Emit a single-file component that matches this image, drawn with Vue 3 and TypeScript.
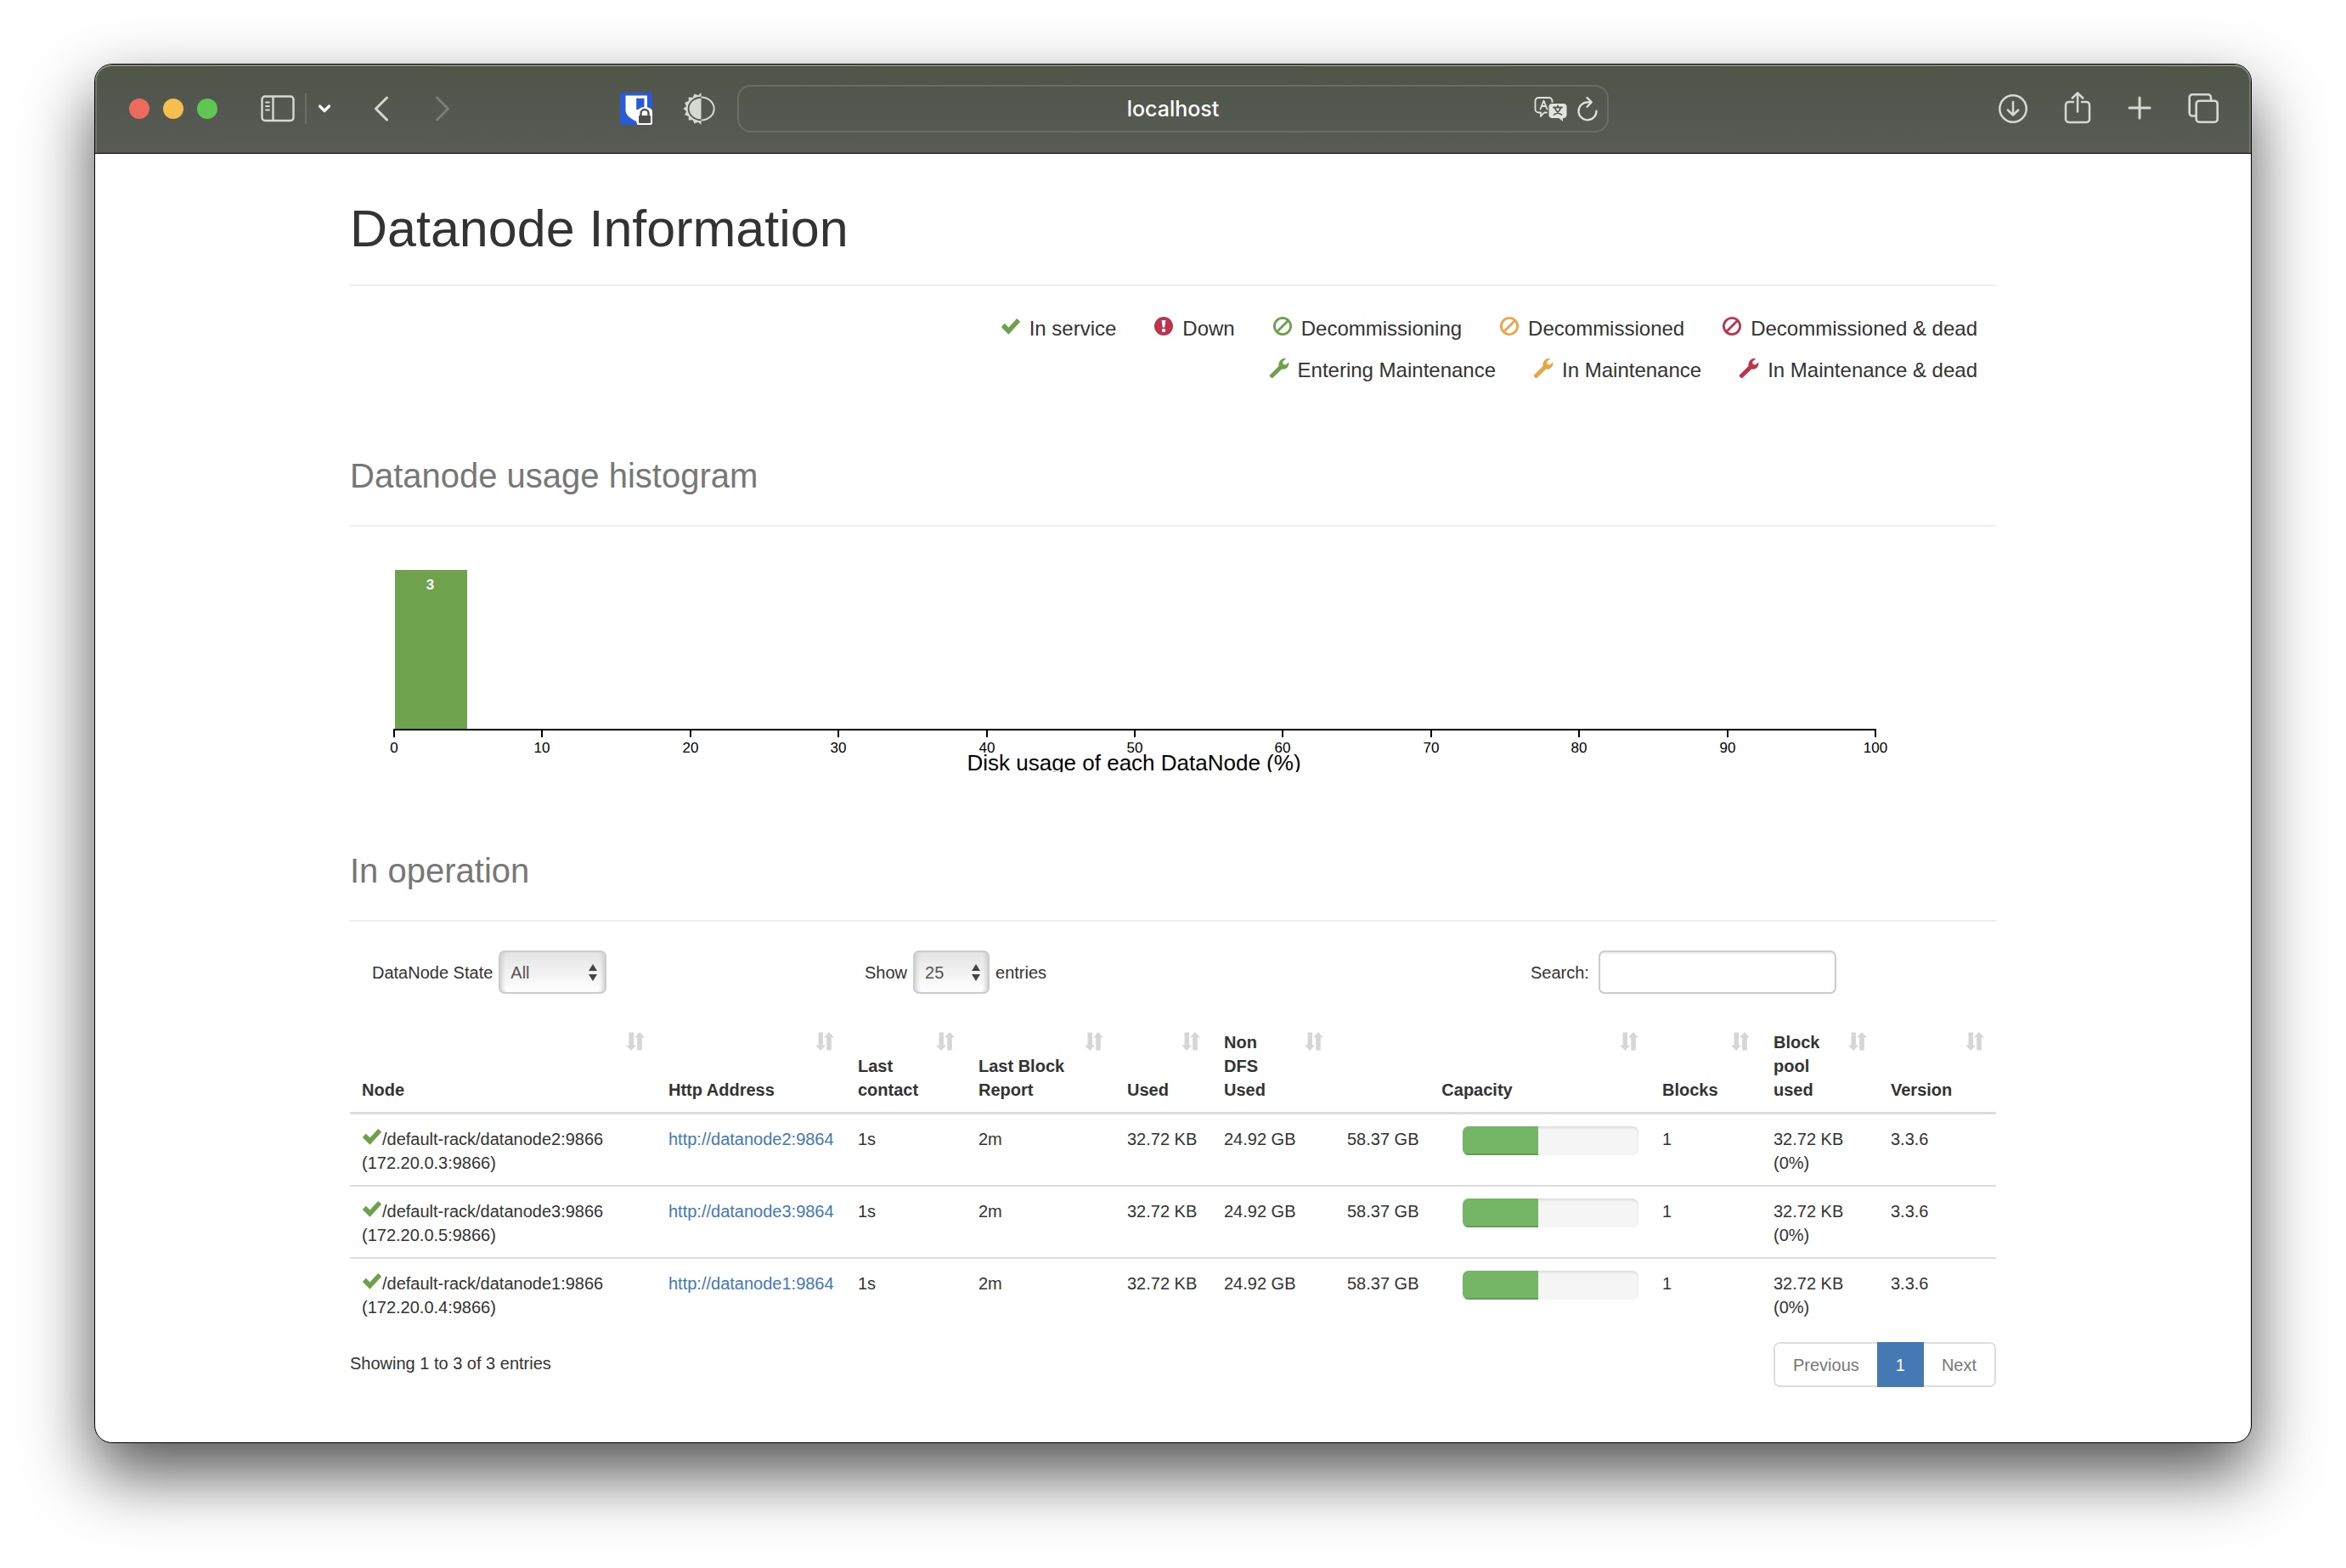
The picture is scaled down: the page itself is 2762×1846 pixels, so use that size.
<script setup lang="ts">
import { computed, ref } from 'vue'

type IconName = 'ok' | 'alert' | 'ban' | 'wrench'
type Tone = 'good' | 'warn' | 'bad'

interface LegendItem {
  icon: IconName
  tone: Tone
  label: string
}

interface DataNode {
  name: string
  address: string
  http: string
  contact: string
  report: string
  used: string
  nonDfs: string
  capacity: string
  fill: number
  blocks: number
  pool: string
  poolShare: string
  version: string
}

const legend: LegendItem[][] = [
  [
    { icon: 'ok', tone: 'good', label: 'In service' },
    { icon: 'alert', tone: 'bad', label: 'Down' },
    { icon: 'ban', tone: 'good', label: 'Decommissioning' },
    { icon: 'ban', tone: 'warn', label: 'Decommissioned' },
    { icon: 'ban', tone: 'bad', label: 'Decommissioned & dead' },
  ],
  [
    { icon: 'wrench', tone: 'good', label: 'Entering Maintenance' },
    { icon: 'wrench', tone: 'warn', label: 'In Maintenance' },
    { icon: 'wrench', tone: 'bad', label: 'In Maintenance & dead' },
  ],
]

const makeNode = (id: number, ip: string): DataNode => ({
  name: `/default-rack/datanode${id}:9866`,
  address: `(${ip}:9866)`,
  http: `http://datanode${id}:9864`,
  contact: '1s',
  report: '2m',
  used: '32.72 KB',
  nonDfs: '24.92 GB',
  capacity: '58.37 GB',
  fill: 43,
  blocks: 1,
  pool: '32.72 KB',
  poolShare: '(0%)',
  version: '3.3.6',
})

const nodes: DataNode[] = [
  makeNode(2, '172.20.0.3'),
  makeNode(3, '172.20.0.5'),
  makeNode(1, '172.20.0.4'),
]

const columns = [
  { key: 'node', label: 'Node', span: 1 },
  { key: 'http', label: 'Http Address', span: 1 },
  { key: 'contact', label: 'Last contact', span: 1 },
  { key: 'report', label: 'Last Block Report', span: 1 },
  { key: 'used', label: 'Used', span: 1 },
  { key: 'nondfs', label: 'Non DFS Used', span: 1 },
  { key: 'capacity', label: 'Capacity', span: 2 },
  { key: 'blocks', label: 'Blocks', span: 1 },
  { key: 'pool', label: 'Block pool used', span: 1 },
  { key: 'version', label: 'Version', span: 1 },
]

const state = ref('All')
const pageSize = ref('25')
const query = ref('')

const visible = computed(() =>
  nodes.filter((n) => (n.name + n.address + n.http).includes(query.value.trim())),
)

// Histogram: linear scale from 0-100 % to the plot width
const plot = { left: 52, width: 1744, top: 35, base: 222 }
const scaleX = (v: number) => plot.left + Math.round((v * plot.width) / 100)
const ticks = Array.from({ length: 11 }, (_, i) => i * 10)
const bins = [{ from: 0, to: 5, count: 3 }]
</script>

<template>
  <div class="window">
    <header class="toolbar">
      <div class="side">
        <span class="light red"></span>
        <span class="light yellow"></span>
        <span class="light green"></span>
        <button class="tool sidebar" aria-label="Sidebar">
          <svg width="40" height="32" viewBox="0 0 40 32" fill="none" stroke="currentColor" stroke-width="2.4">
            <rect x="1.5" y="1.5" width="37" height="28.5" rx="3.5" />
            <path d="M14.5 2v28" />
            <path d="M6 8.500h4M6 13h4M6 17.500h4" stroke-width="1.8" stroke-linecap="round" />
          </svg>
        </button>
        <span class="divider"></span>
        <button class="tool groups" aria-label="Tab groups">
          <svg width="16" height="12" viewBox="0 0 16 12" fill="none" stroke="#fff" stroke-width="3.2" stroke-linecap="round" stroke-linejoin="round">
            <path d="M2.500 3l5.500 5.500L13.500 3" />
          </svg>
        </button>
        <button class="tool back" aria-label="Back">
          <svg width="18" height="30" viewBox="0 0 18 30" fill="none" stroke="currentColor" stroke-width="3" stroke-linecap="round" stroke-linejoin="round">
            <path d="M15.500 2L2.500 15l13 13" />
          </svg>
        </button>
        <button class="tool forward" aria-label="Forward">
          <svg width="18" height="30" viewBox="0 0 18 30" fill="none" stroke="currentColor" stroke-width="3" stroke-linecap="round" stroke-linejoin="round">
            <path d="M2.500 2l13 13-13 13" />
          </svg>
        </button>
        <div class="extensions">
          <button class="tool" aria-label="Password manager">
            <svg width="38" height="38" viewBox="0 0 38 38">
              <rect width="38" height="38" rx="2.500" fill="#2a5bd6" />
              <path d="M6.500 3.500h25.500v17c0 6-5.500 10-12.700 13.500C12 30.500 6.500 26.500 6.500 20.500z" fill="#fff" />
              <path d="M19.200 6.800H28.500V20h-9.300z" fill="#2a5bd6" />
              <path d="M38 22v13.500a2.500 2.500 0 0 1-2.500 2.500H20.500l-1.300-3.500V27c0-6 4-10 9.500-10s9.300 2 9.300 5z" fill="#fff" />
              <path d="M24.500 28v-3.500a4.500 4.500 0 0 1 9 0V28" fill="none" stroke="#4f504d" stroke-width="2.400" />
              <rect x="22" y="27" width="14" height="9" rx="1.200" fill="#4f504d" />
            </svg>
          </button>
          <button class="tool" aria-label="Dark mode">
            <svg width="38" height="38" viewBox="0 0 38 38" fill="currentColor">
              <path d="M21.500 0L18 3.300l-4.500-1.900-1.900 4.300-4.900-.1v4.500l-4.600 1.600L4 15.900.5 19 4 22.100l-1.900 4.200 4.600 1.600v4.500l4.900-.1 1.900 4.300 4.500-1.900 3.500 3.300v-4.800a15.800 14.200 0 0 1 0-28.400z" />
              <path d="M21.500 6.700a14 12.300 0 0 0 0 24.600z" />
              <path d="M21.500 5.500a15.200 13.500 0 0 1 0 27" fill="none" stroke="currentColor" stroke-width="2" />
            </svg>
          </button>
        </div>
      </div>

      <div class="address">
        <span class="host">localhost</span>
        <div class="address-tools">
          <button class="tool" aria-label="Translate">
            <svg width="40" height="30" viewBox="0 0 40 30" fill="none" stroke="currentColor" stroke-width="1.800" stroke-linejoin="round" stroke-linecap="round">
              <path d="M15 19.500h-3L8 24v-4.500H5.500a4 4 0 0 1-4-4V6a4 4 0 0 1 4-4h12a4 4 0 0 1 4 4v1" />
              <path d="M7.500 15.500L11.500 5.500l4 10M9 12h5" />
              <rect x="17.500" y="9" width="21" height="17" rx="4" fill="currentColor" stroke="none" />
              <path d="M28 25h6v5z" fill="currentColor" stroke="none" />
              <path d="M23 13.500h10M28 11.500v2M31.500 14c-1.500 4-4 6.500-8 8M24.500 14c1.500 4 4 6.500 8 8" stroke="#535850" />
            </svg>
          </button>
          <button class="tool" aria-label="Reload">
            <svg width="26" height="30" viewBox="0 0 26 30" fill="none" stroke="currentColor" stroke-width="2.200" stroke-linecap="round" stroke-linejoin="round">
              <path d="M23.500 17.500A10.500 10.500 0 1 1 13 7.300h4" />
              <path d="M12.500 2l5.300 5.300-5.300 5.500" />
            </svg>
          </button>
        </div>
      </div>

      <div class="side end">
        <button class="tool" aria-label="Downloads">
          <svg width="36" height="36" viewBox="0 0 36 36" fill="none" stroke="currentColor" stroke-width="2.500" stroke-linecap="round" stroke-linejoin="round">
            <circle cx="18" cy="18" r="15.700" />
            <path d="M18 10v15M11.800 19.500L18 25.500l6.200-6" />
          </svg>
        </button>
        <button class="tool" aria-label="Share">
          <svg width="32" height="40" viewBox="0 0 32 40" fill="none" stroke="currentColor" stroke-width="2.500" stroke-linecap="round" stroke-linejoin="round">
            <path d="M11 12H5.500A3.500 3.500 0 0 0 2 15.500v17A3.500 3.500 0 0 0 5.500 36h21a3.500 3.500 0 0 0 3.500-3.500v-17a3.500 3.500 0 0 0-3.500-3.500H21" />
            <path d="M16 23.500V1.500M9.800 7.500l6.200-6.200 6.200 6.200" />
          </svg>
        </button>
        <button class="tool" aria-label="New tab">
          <svg width="30" height="30" viewBox="0 0 30 30" fill="none" stroke="currentColor" stroke-width="3" stroke-linecap="round">
            <path d="M15 2v24M3 14h24" />
          </svg>
        </button>
        <button class="tool" aria-label="Tab overview">
          <svg width="36" height="36" viewBox="0 0 36 36" fill="none" stroke="currentColor" stroke-width="2.600" stroke-linejoin="round">
            <rect x="9.700" y="8.700" width="25" height="25" rx="3.500" />
            <path d="M9 26.500H5.200A3.500 3.500 0 0 1 1.700 23V4.700a3.500 3.500 0 0 1 3.500-3.500h18.300A3.500 3.500 0 0 1 27 4.700v3.800" />
          </svg>
        </button>
      </div>
    </header>

    <main class="page">
      <h1>Datanode Information</h1>

      <div class="legend">
        <ul v-for="(row, r) in legend" :key="r">
          <li v-for="item in row" :key="item.label">
            <svg class="glyph" :class="item.tone" width="24" height="24" viewBox="0 0 24 24" fill="currentColor">
              <path v-if="item.icon === 'ok'" d="M.8 13l4-4.200 4.700 4.700L19.200 3l4 3.700L9.500 21.800z" />
              <template v-else-if="item.icon === 'alert'">
                <circle cx="12" cy="12" r="11" />
                <path d="M9.600 5h4.800l-1.200 8.500h-2.400zM10 15.300h4v3.500h-4z" fill="#fff" />
              </template>
              <g v-else-if="item.icon === 'ban'" fill="none" stroke="currentColor" stroke-width="2.800">
                <circle cx="12" cy="12" r="9.600" />
                <path d="M5.500 18.500l13-13" />
              </g>
              <path v-else d="M1 20.500L11.500 10c-.6-3.500.8-7 4.300-8.600 1.500-.6 3-.6 4.400-.2l-4 3.600.4 3 3.200.6 3.400-3c.6 3-.6 6.200-3.400 7.600-1.500.7-3 .9-4.600.4L4.600 23.700a1.500 1.500 0 0 1-2 0L1 22.300a1.300 1.300 0 0 1 0-1.800z" />
            </svg>
            <span>{{ item.label }}</span>
          </li>
        </ul>
      </div>

      <h2 class="histogram-title">Datanode usage histogram</h2>
      <svg class="histogram" role="img" aria-label="Disk usage of each DataNode">
        <g v-for="bin in bins" :key="bin.from">
          <rect class="bar" :x="scaleX(bin.from) + 1" :y="plot.top" :width="scaleX(bin.to) - scaleX(bin.from) - 2" :height="plot.base - plot.top" />
          <text class="count" :x="(scaleX(bin.from) + scaleX(bin.to)) / 2 - 1" :y="plot.top + 23">{{ bin.count }}</text>
        </g>
        <rect :x="plot.left - 1" :y="plot.base" :width="plot.width + 2" height="2" />
        <g v-for="t in ticks" :key="t">
          <rect :x="scaleX(t) - 1" :y="plot.base" width="2" height="10" />
          <text class="tick" :x="scaleX(t)" :y="plot.base + 28">{{ t }}</text>
        </g>
        <text class="axis-label" :x="plot.left + plot.width / 2 - 1" :y="plot.base + 49">Disk usage of each DataNode (%)</text>
      </svg>

      <h2 class="operation-title">In operation</h2>

      <div class="controls">
        <label class="control">
          <span>DataNode State</span>
          <span class="select wide">
            <select v-model="state">
              <option>All</option>
              <option>In service</option>
              <option>Down</option>
            </select>
            <svg width="10" height="20" viewBox="0 0 10 20" fill="#444"><path d="M5 0l5 8H0zM5 20l5-8H0z" /></svg>
          </span>
        </label>
        <label class="control">
          <span>Show</span>
          <span class="select">
            <select v-model="pageSize">
              <option>25</option>
              <option>50</option>
              <option>100</option>
            </select>
            <svg width="10" height="20" viewBox="0 0 10 20" fill="#444"><path d="M5 0l5 8H0zM5 20l5-8H0z" /></svg>
          </span>
          <span>entries</span>
        </label>
        <label class="control search">
          <span>Search:</span>
          <input v-model="query" type="search" />
        </label>
      </div>

      <table>
        <colgroup>
          <col class="c-node" /><col class="c-http" /><col class="c-contact" /><col class="c-report" />
          <col class="c-used" /><col class="c-nondfs" /><col class="c-value" /><col class="c-progress" />
          <col class="c-blocks" /><col class="c-pool" /><col class="c-version" />
        </colgroup>
        <thead>
          <tr>
            <th v-for="col in columns" :key="col.key" :colspan="col.span" :class="{ centered: col.span > 1 }">
              {{ col.label }}
              <button class="sort" :aria-label="'Sort by ' + col.label">
                <svg width="22" height="22" viewBox="0 0 22 22" fill="currentColor">
                  <path d="M3.500 0.500H9v15h3L6.200 22 0 15.500h3.500zM16 0l6 6.500h-3.200v15h-5.600v-15H10z" />
                </svg>
              </button>
            </th>
          </tr>
        </thead>
        <tbody>
          <tr v-for="n in visible" :key="n.name">
            <td>
              <svg class="good state" width="24" height="24" viewBox="0 0 24 24" fill="currentColor">
                <path d="M.8 12l4-4.200 4.700 4.700L19.200 2l4 3.700L9.500 20.800z" />
              </svg>{{ n.name }}<br />{{ n.address }}
            </td>
            <td><a :href="n.http">{{ n.http }}</a></td>
            <td>{{ n.contact }}</td>
            <td>{{ n.report }}</td>
            <td>{{ n.used }}</td>
            <td>{{ n.nonDfs }}</td>
            <td>{{ n.capacity }}</td>
            <td class="meter"><div class="progress"><div class="fill" :style="{ width: n.fill + '%' }"></div></div></td>
            <td>{{ n.blocks }}</td>
            <td>{{ n.pool }}<br />{{ n.poolShare }}</td>
            <td>{{ n.version }}</td>
          </tr>
        </tbody>
      </table>

      <div class="footer">
        <p>Showing 1 to {{ visible.length }} of {{ nodes.length }} entries</p>
        <nav class="pages" aria-label="Pagination">
          <button>Previous</button>
          <button class="active">1</button>
          <button>Next</button>
        </nav>
      </div>
    </main>
  </div>
</template>

<style>
body {
  margin: 0;
  background: #fff;
}
</style>

<style scoped>
.window {
  margin: 75px 111px 148px;
  border: 1px solid #000;
  border-radius: 21px;
  overflow: hidden;
  background: #fff;
  box-shadow: 0 36px 80px rgba(0, 0, 0, 0.68);
  color: #333;
  font-family: "Liberation Sans", Arial, Helvetica, sans-serif;
  font-size: 20px;
  line-height: 28px;
}

button,
input,
select {
  font: inherit;
  box-sizing: border-box;
}

button {
  padding: 0;
  border: 0;
  background: none;
  cursor: pointer;
}

svg {
  display: block;
}

/* Browser toolbar */
.toolbar {
  display: grid;
  grid-template-columns: 1fr minmax(0, 1026px) 1fr;
  align-items: center;
  height: 104px;
  border-bottom: 1px solid #000;
  border-radius: 20px 20px 0 0;
  background: linear-gradient(#505548, #535850 50%, #595a55);
  box-shadow: inset 0 2px 0 #858a7e, inset 2px 0 0 #74776f, inset -2px 0 0 #74776f;
  color: #d5d9d1;
}

.side {
  display: flex;
  align-items: center;
  padding: 0 26px 0 40px;
}

.side.end {
  justify-content: flex-end;
  gap: 42px;
  padding: 0 38px;
}

.light {
  width: 24px;
  height: 24px;
  margin-right: 16px;
  border-radius: 50%;
}

.red { background: #ed6a5e; }
.yellow { background: #f5bf4f; }
.green { background: #61c554; }

.tool {
  flex: none;
  color: inherit;
}

.sidebar {
  margin-left: 35px;
}

.divider {
  width: 2px;
  height: 36px;
  margin: 0 13px 0 12px;
  background: #696d65;
}

.back {
  margin-left: 50px;
}

.forward {
  margin-left: 54px;
  opacity: 0.3;
}

.extensions {
  display: flex;
  gap: 36px;
  margin-left: auto;
}

.address {
  display: grid;
  grid-template-columns: 1fr auto 1fr;
  align-items: center;
  height: 56px;
  box-sizing: border-box;
  border: 2px solid #696d65;
  border-radius: 16px;
}

.host {
  grid-column: 2;
  color: #fff;
  font-family: Inter, "Liberation Sans", sans-serif;
  font-size: 25px;
  font-weight: 500;
}

.address-tools {
  display: flex;
  justify-content: flex-end;
  gap: 10px;
  padding-right: 10px;
  color: #e2e4df;
}

/* Page */
.page {
  width: 1938px;
  max-width: 92%;
  margin: 0 auto;
  padding: 55px 0 65px;
}

h1,
h2 {
  margin: 0;
  border-bottom: 2px solid #eee;
  font-weight: 400;
}

h1 {
  padding-bottom: 32px;
  font-size: 61px;
  line-height: 67px;
}

h2 {
  padding-bottom: 36px;
  color: #777;
  font-size: 40px;
  line-height: 44px;
}

.histogram-title {
  margin-top: 78px;
}

.operation-title {
  margin-top: 94px;
}

.legend {
  margin-top: 25px;
  padding-right: 22px;
  font-size: 24px;
  line-height: 49px;
}

.legend ul {
  display: flex;
  justify-content: flex-end;
  gap: 44px;
  margin: 0;
  padding: 0;
  list-style: none;
}

.legend li {
  display: flex;
  align-items: center;
  gap: 10px;
}

.glyph {
  margin-bottom: 5px;
}

.good { color: #6da04b; }
.warn { color: #e9a54a; }
.bad { color: #bb3450; }

/* Histogram */
.histogram {
  width: 100%;
  height: 273px;
  margin-top: 16px;
  overflow: hidden;
}

.histogram text {
  text-anchor: middle;
}

.bar {
  fill: #6fa24c;
}

.count {
  fill: #fff;
  font-size: 17px;
  font-weight: 700;
}

.tick {
  fill: #000;
  font-size: 17px;
}

.axis-label {
  fill: #000;
  font-size: 26px;
}

/* Table controls */
.controls {
  display: grid;
  grid-template-columns: 580fr 784fr 548fr;
  margin-top: 34px;
  padding-left: 26px;
}

.control {
  display: flex;
  align-items: center;
  gap: 7px;
}

.search {
  gap: 11px;
}

.select {
  position: relative;
}

.select svg {
  position: absolute;
  top: 16px;
  right: 11px;
  pointer-events: none;
}

.select select {
  appearance: none;
  width: 90px;
  height: 51px;
  padding: 0 12px;
  border: 2px solid #ccc;
  border-radius: 7px;
  background: linear-gradient(#e4e4e4, #fff);
  box-shadow: inset 6px 0 5px -4px #ccc, inset -6px 0 5px -4px #ccc;
  color: #555;
}

.select.wide select {
  width: 127px;
}

.search input {
  appearance: none;
  width: 280px;
  height: 51px;
  padding: 0 12px;
  border: 2px solid #ccc;
  border-radius: 7px;
  background: #fff;
  box-shadow: inset 0 2px 2px rgba(0, 0, 0, 0.08);
  color: #555;
}

/* Data table */
table {
  width: 100%;
  margin-top: 28px;
  border-spacing: 0;
  table-layout: fixed;
}

.c-node { width: 361px; }
.c-http { width: 223px; }
.c-contact { width: 142px; }
.c-report { width: 175px; }
.c-used { width: 114px; }
.c-nondfs { width: 145px; }
.c-value { width: 136px; }
.c-progress { width: 235px; }
.c-blocks { width: 131px; }
.c-pool { width: 138px; }
.c-version { width: 138px; }

th {
  position: relative;
  padding: 15px 51px 12px 14px;
  border-bottom: 3px solid #ddd;
  text-align: left;
  vertical-align: bottom;
}

th.centered {
  text-align: center;
}

.sort {
  position: absolute;
  top: 17px;
  right: 14px;
  color: #d6d6d6;
}

td {
  padding: 15px 14px 12px;
  vertical-align: top;
}

td.meter {
  padding-top: 14px;
}

tr + tr td {
  border-top: 2px solid #ddd;
}

td a {
  color: #3f78b9;
  text-decoration: none;
}

.state {
  display: inline-block;
  vertical-align: top;
}

.progress {
  height: 34px;
  border-radius: 7px;
  overflow: hidden;
  background: #f5f5f5;
  box-shadow: inset 0 2px 3px rgba(0, 0, 0, 0.1);
}

.fill {
  height: 100%;
  background: #75b566;
  box-shadow: inset 0 -2px 0 #649b57;
}

/* Table footer */
.footer {
  display: flex;
  justify-content: space-between;
  align-items: flex-start;
  margin-top: 15px;
}

.footer p {
  margin: 0;
  padding-top: 11px;
}

.pages {
  display: flex;
  overflow: hidden;
  border-radius: 7px;
}

.pages button {
  height: 53px;
  padding: 0 21px;
  border: 2px solid #ddd;
  border-right-width: 0;
  color: #777;
}

.pages button:first-child {
  border-radius: 7px 0 0 7px;
}

.pages button:last-child {
  border-right-width: 2px;
  border-left-width: 0;
  border-radius: 0 7px 7px 0;
}

.pages button.active {
  padding: 0 22px;
  border-width: 0;
  background: #4579b3;
  color: #fff;
}
</style>
